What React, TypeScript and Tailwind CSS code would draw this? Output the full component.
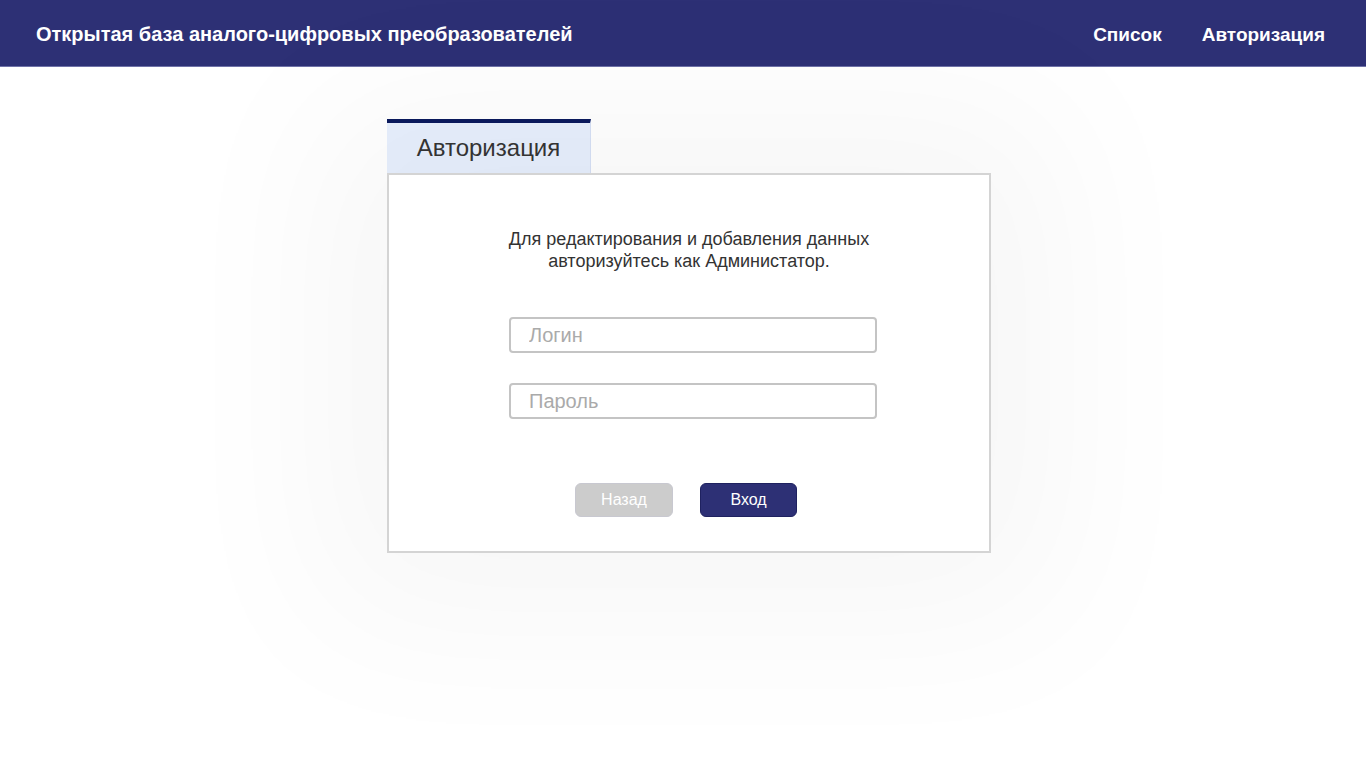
export default function App() {
  return (
    <div className="min-h-[768px] bg-white font-['Liberation_Sans',Arial,sans-serif]">
      <header className="flex h-[67px] items-center justify-between border-b border-[#6f72a8] bg-[#2d3075] pl-9 pr-[41px] pt-[1px] text-white">
        <div className="text-[20px] font-bold">Открытая база аналого-цифровых преобразователей</div>
        <nav className="flex gap-10 pt-[4px] text-[19px] font-bold">
          <a>Список</a>
          <a>Авторизация</a>
        </nav>
      </header>

      <main className="flex justify-center pt-[52px]">
        <div className="ml-[12px] w-[604px]">
          <div className="flex h-[54px] w-[204px] items-center justify-center border-t-4 border-r border-t-[#0b1a5e] border-r-[#d6e0f5] bg-[#e7effd] text-[24px] text-[#333]">
            Авторизация
          </div>
          <div className="flex h-[380px] flex-col items-center border-2 border-[#d4d4d4] bg-white pt-[53px] shadow-[0_0_160px_70px_rgba(0,0,0,0.035)]">
            <p className="text-center text-[18px] leading-[22px] text-[#333]">
              Для редактирования и добавления данных
              <br />
              авторизуйтесь как Администатор.
            </p>
            <div className="mt-[45px] ml-[8px] flex flex-col gap-[30px]">
              <input
                placeholder="Логин"
                className="h-9 w-[368px] rounded border-2 border-[#c4c4c4] px-[18px] text-[20px] outline-none placeholder:text-[#aaa]"
              />
              <input
                placeholder="Пароль"
                className="h-9 w-[368px] rounded border-2 border-[#c4c4c4] px-[18px] text-[20px] outline-none placeholder:text-[#aaa]"
              />
            </div>
            <div className="mt-[64px] flex gap-[27px] pr-[6px]">
              <button className="h-[34px] w-[98px] rounded-md border border-[#c8c8d0] bg-[#cccccc] text-[16px] text-white">
                Назад
              </button>
              <button className="h-[34px] w-[97px] rounded-md border border-[#1f2260] bg-[#2d3075] text-[16px] text-white">
                Вход
              </button>
            </div>
          </div>
        </div>
      </main>
    </div>
  );
}
